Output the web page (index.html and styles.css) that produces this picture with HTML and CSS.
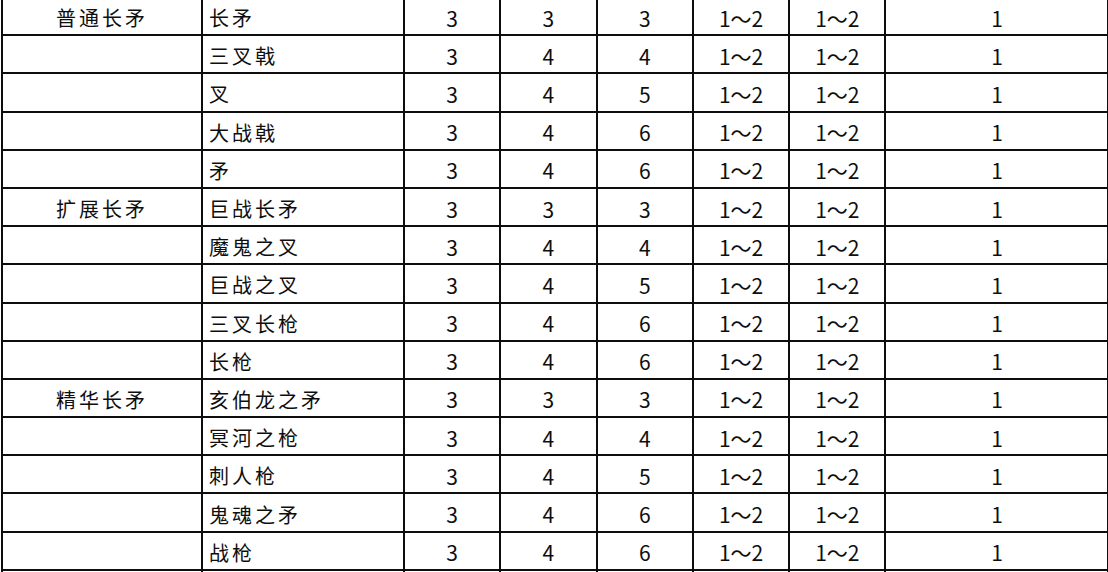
FILE: index.html
```html
<!DOCTYPE html>
<html lang="zh">
<head>
<meta charset="utf-8">
<link rel="stylesheet" href="styles.css">
</head>
<body>
<table class="grid">
<colgroup>
<col class="c-cat"><col class="c-name"><col class="c-n"><col class="c-n"><col class="c-n"><col class="c-n"><col class="c-n"><col class="c-last">
</colgroup>
<tbody>
<tr><td class="cat">普通长矛</td><td class="name">长矛</td><td>3</td><td>3</td><td>3</td><td>1～2</td><td>1～2</td><td>1</td></tr>
<tr><td class="cat"></td><td class="name">三叉戟</td><td>3</td><td>4</td><td>4</td><td>1～2</td><td>1～2</td><td>1</td></tr>
<tr><td class="cat"></td><td class="name">叉</td><td>3</td><td>4</td><td>5</td><td>1～2</td><td>1～2</td><td>1</td></tr>
<tr><td class="cat"></td><td class="name">大战戟</td><td>3</td><td>4</td><td>6</td><td>1～2</td><td>1～2</td><td>1</td></tr>
<tr><td class="cat"></td><td class="name">矛</td><td>3</td><td>4</td><td>6</td><td>1～2</td><td>1～2</td><td>1</td></tr>
<tr><td class="cat">扩展长矛</td><td class="name">巨战长矛</td><td>3</td><td>3</td><td>3</td><td>1～2</td><td>1～2</td><td>1</td></tr>
<tr><td class="cat"></td><td class="name">魔鬼之叉</td><td>3</td><td>4</td><td>4</td><td>1～2</td><td>1～2</td><td>1</td></tr>
<tr><td class="cat"></td><td class="name">巨战之叉</td><td>3</td><td>4</td><td>5</td><td>1～2</td><td>1～2</td><td>1</td></tr>
<tr><td class="cat"></td><td class="name">三叉长枪</td><td>3</td><td>4</td><td>6</td><td>1～2</td><td>1～2</td><td>1</td></tr>
<tr><td class="cat"></td><td class="name">长枪</td><td>3</td><td>4</td><td>6</td><td>1～2</td><td>1～2</td><td>1</td></tr>
<tr><td class="cat">精华长矛</td><td class="name">亥伯龙之矛</td><td>3</td><td>3</td><td>3</td><td>1～2</td><td>1～2</td><td>1</td></tr>
<tr><td class="cat"></td><td class="name">冥河之枪</td><td>3</td><td>4</td><td>4</td><td>1～2</td><td>1～2</td><td>1</td></tr>
<tr><td class="cat"></td><td class="name">刺人枪</td><td>3</td><td>4</td><td>5</td><td>1～2</td><td>1～2</td><td>1</td></tr>
<tr><td class="cat"></td><td class="name">鬼魂之矛</td><td>3</td><td>4</td><td>6</td><td>1～2</td><td>1～2</td><td>1</td></tr>
<tr><td class="cat"></td><td class="name">战枪</td><td>3</td><td>4</td><td>6</td><td>1～2</td><td>1～2</td><td>1</td></tr>
<tr class="stub"><td></td><td></td><td></td><td></td><td></td><td></td><td></td><td></td></tr>
</tbody>
</table>
</body>
</html>
```

FILE: styles.css
```css
html, body {
  margin: 0;
  padding: 0;
  background: #ffffff;
  overflow: hidden;
}
body {
  width: 1108px;
  height: 572px;
}
.grid {
  border-collapse: collapse;
  table-layout: fixed;
  width: 1107px;
  margin-top: -4px;
  margin-left: 1px;
  font-family: "Noto Sans CJK SC", "Noto Sans", sans-serif;
  font-size: 21px;
  font-weight: 400;
  color: #0e0e0e;
}
.c-cat { width: 200px; }
.c-name { width: 202px; }
.c-n { width: 96.3px; }
.c-last { width: 223px; }
.grid td {
  border: 2px solid #0d0d0d;
  height: 38.2px;
  padding: 4px 0 0 0;
  text-align: center;
  vertical-align: middle;
  line-height: 1;
  white-space: nowrap;
  box-sizing: border-box;
}
.grid tr.stub td {
  height: 6px;
  padding: 0;
  border-bottom: 0;
}
.grid td.cat {
  font-size: 20px;
  letter-spacing: 3px;
  text-align: center;
}
.grid td.name {
  font-size: 20px;
  text-align: left;
  padding-left: 6px;
  letter-spacing: 3px;
}
```
